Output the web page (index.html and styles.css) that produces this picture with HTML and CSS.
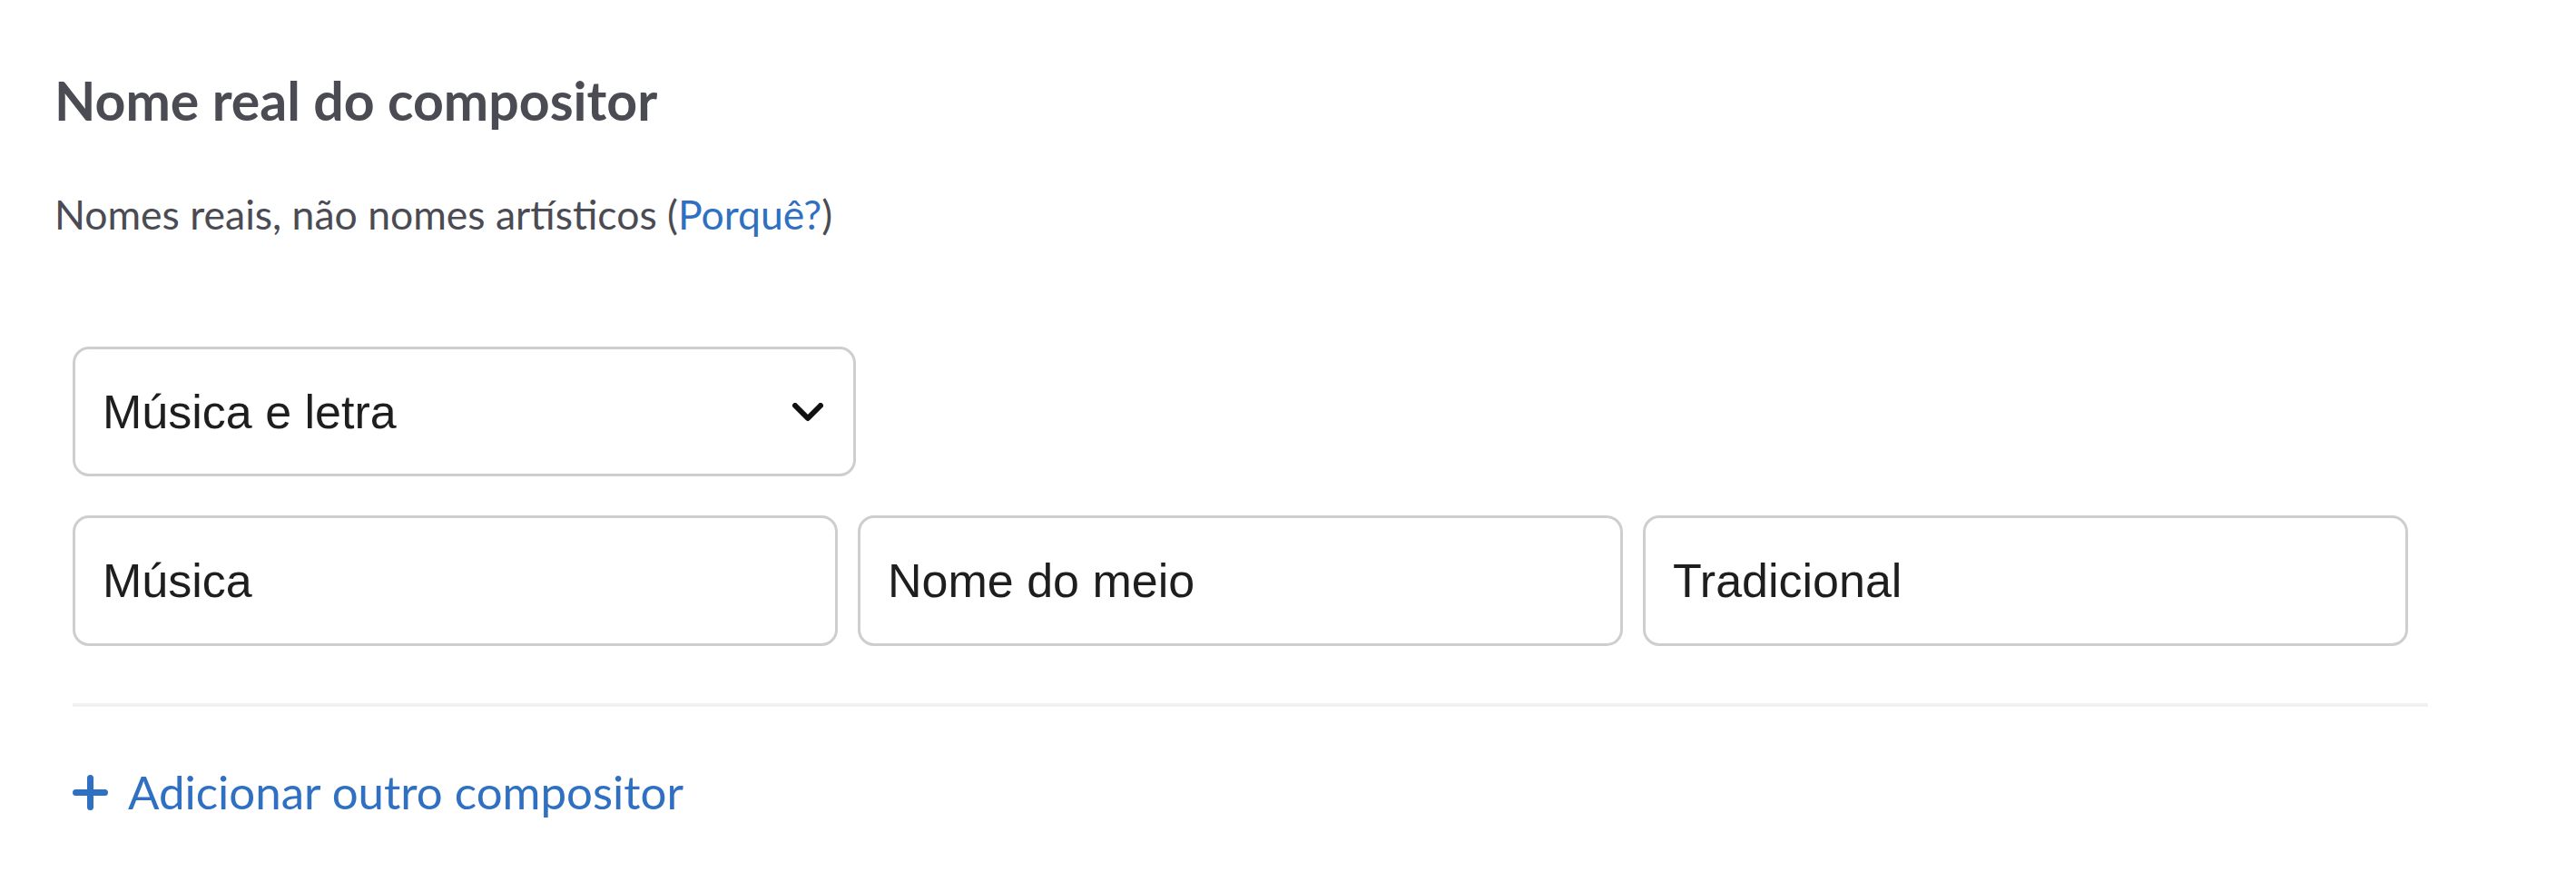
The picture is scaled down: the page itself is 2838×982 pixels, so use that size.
FILE: index.html
```html
<!DOCTYPE html>
<html lang="pt">
<head>
<meta charset="utf-8">
<title>Nome real do compositor</title>
<link rel="stylesheet" href="styles.css">
</head>
<body>
<div class="page">
  <h2 class="title">Nome real do compositor</h2>
  <p class="hint">Nomes reais, não nomes artísticos (<a class="link" href="#">Porquê?</a>)</p>
  <div class="composer">
    <div class="select-row">
      <div class="select">
        <span class="select-value">Música e letra</span>
        <svg class="chevron" width="34" height="22" viewBox="0 0 34 22"><polyline points="3,3 17,17 31,3" fill="none" stroke="#111" stroke-width="6" stroke-linecap="round" stroke-linejoin="round"/></svg>
      </div>
    </div>
    <div class="name-row">
      <div class="field"><input class="input" type="text" value="Música"></div>
      <div class="field"><input class="input" type="text" value="Nome do meio"></div>
      <div class="field"><input class="input" type="text" value="Tradicional"></div>
    </div>
    <div class="divider"></div>
    <a class="add" href="#">
      <svg class="plus" width="39" height="39" viewBox="0 0 39 39"><path d="M3.5 19.5H35.5M19.5 3.5V35.5" fill="none" stroke="#2f70c2" stroke-width="7" stroke-linecap="round"/></svg>
      <span>Adicionar outro compositor</span>
    </a>
  </div>
</div>
</body>
</html>
```
FILE: styles.css
```css
html, body {
  margin: 0;
  padding: 0;
  background: #ffffff;
}
.page {
  padding: 75px 0 0 60px;
  font-family: Lato, "Noto Sans", sans-serif;
}
.title {
  margin: 0;
  font-size: 59px;
  line-height: 72px;
  font-weight: 700;
  color: #4b4b53;
}
.hint {
  margin: 65px 0 0 0;
  font-size: 44.5px;
  line-height: 48px;
  font-weight: 400;
  color: #4b4b53;
}
.link {
  color: #2f70c2;
  text-decoration: none;
}
.composer {
  margin: 122px 0 0 20px;
  width: 2595px;
}
.select-row {
  display: grid;
  grid-template-columns: 863px;
}
.select {
  box-sizing: border-box;
  height: 143px;
  border: 3px solid #cecece;
  border-radius: 18px;
  padding: 0 33px 0 30px;
  display: flex;
  align-items: center;
  justify-content: space-between;
  font-family: "Liberation Sans", Arial, sans-serif;
  font-size: 52px;
  color: #1e1e1e;
}
.chevron {
  display: block;
  margin-top: 2px;
}
.name-row {
  margin-top: 43px;
  display: grid;
  grid-template-columns: repeat(3, 1fr);
}
.field {
  padding-right: 22px;
}
.input {
  box-sizing: border-box;
  display: block;
  width: 100%;
  height: 144px;
  margin: 0;
  border: 3px solid #cecece;
  border-radius: 18px;
  padding: 0 30px;
  font-family: "Liberation Sans", Arial, sans-serif;
  font-size: 52px;
  color: #1e1e1e;
  background: #fff;
  outline: none;
}
.divider {
  margin-top: 63px;
  height: 4px;
  background: #f1f1f3;
}
.add {
  margin-top: 64px;
  display: flex;
  align-items: center;
  gap: 22px;
  font-size: 51px;
  line-height: 60px;
  color: #2f70c2;
  text-decoration: none;
}
.plus {
  display: block;
  flex: none;
}
```
